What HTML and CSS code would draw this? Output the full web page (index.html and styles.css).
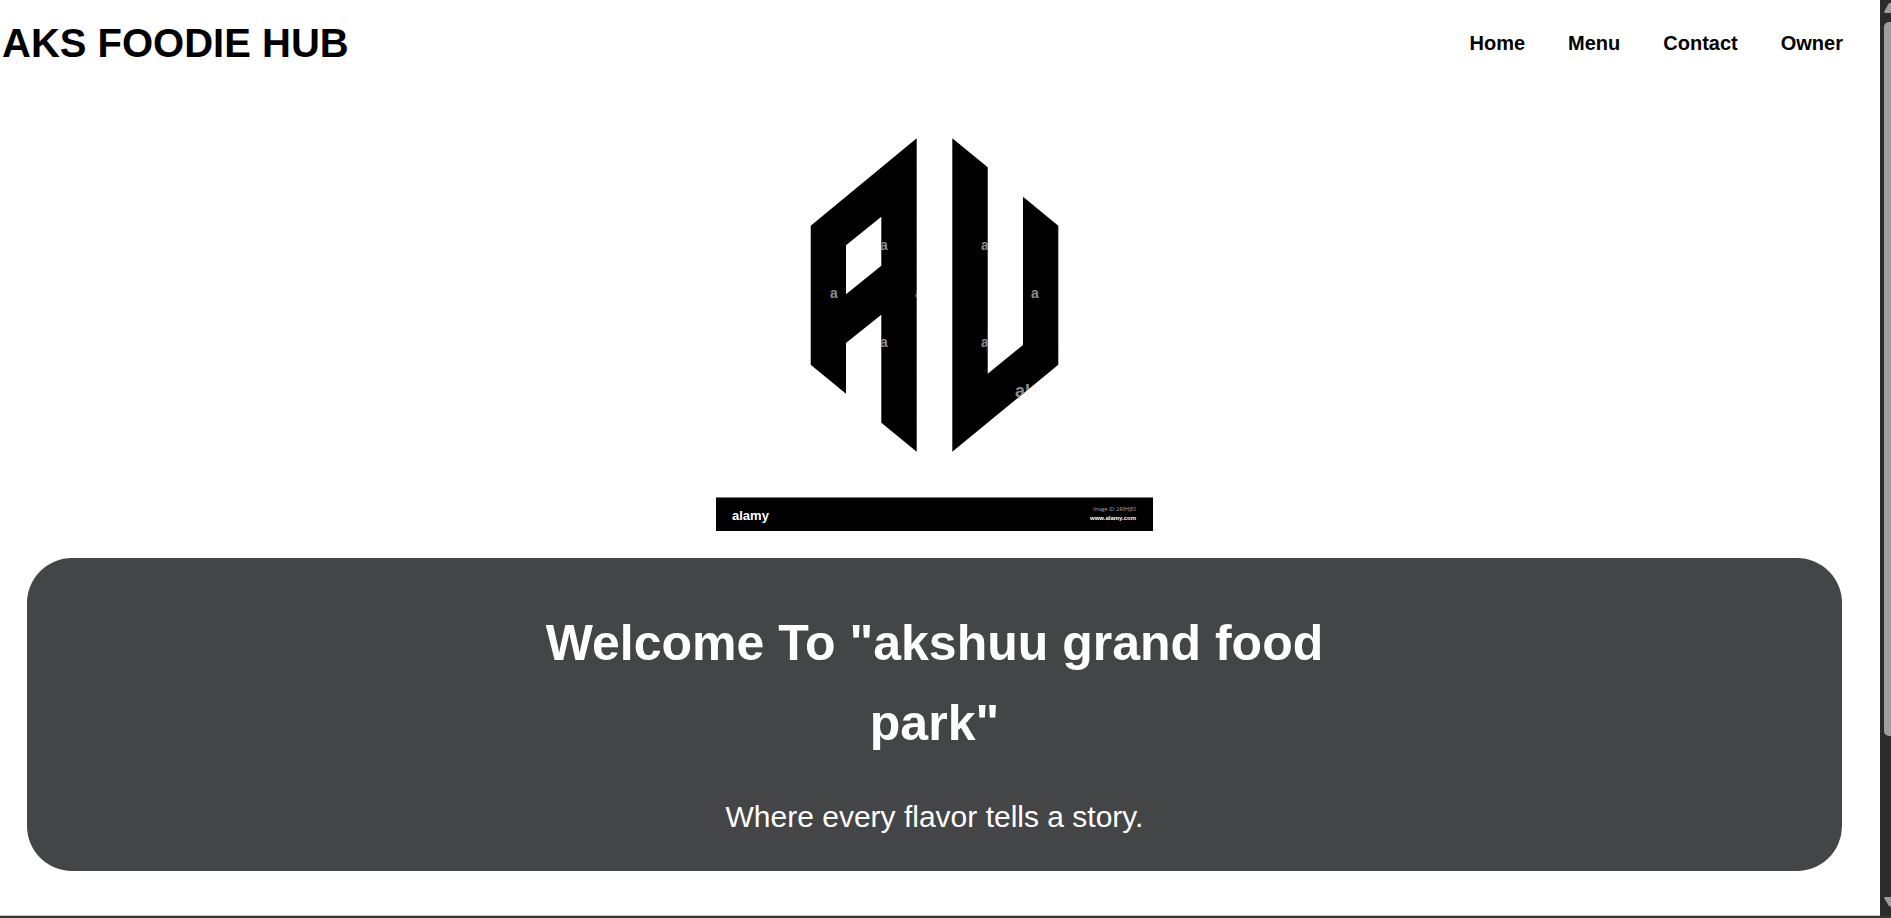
FILE: index.html
```
<!DOCTYPE html>
<html lang="en">
<head>
<meta charset="utf-8">
<title>AKS FOODIE HUB</title>
<link rel="stylesheet" href="styles.css">
</head>
<body>
<div class="page">
  <header class="header">
    <h1 class="brand">AKS FOODIE HUB</h1>
    <nav class="nav">
      <a href="#home">Home</a>
      <a href="#menu">Menu</a>
      <a href="#contact">Contact</a>
      <a href="#owner">Owner</a>
    </nav>
  </header>
  <main class="main" id="home">
    <svg class="logo" viewBox="0 0 437 411" role="img" aria-label="AU monogram">
      <defs>
        <clipPath id="mono">
          <path clip-rule="evenodd" d="M200.7 18.3 94.7 105.7V244.7L130 273.7V223L165.3 194.7V302.7L200.7 331.7ZM130 125.3 165.3 96.7V145.7L130 174.3ZM236.3 18.3 271.7 47.3V253.7L307 225V76.7L342.3 105.7V244.7L236.3 331.7Z"/>
        </clipPath>
      </defs>
      <g clip-path="url(#mono)">
        <rect width="437" height="350"/>
        <g class="mark">
          <text x="114" y="178">a</text>
          <text x="164" y="130">a</text>
          <text x="164" y="227">a</text>
          <text x="199" y="178">a</text>
          <text x="265" y="130">a</text>
          <text x="265" y="227">a</text>
          <text x="315" y="178">a</text>
          <text class="mark-large" x="299" y="277">alamy</text>
        </g>
      </g>
      <rect y="377" width="437" height="34"/>
      <rect y="377" width="437" height="1" fill="#777"/>
      <text class="bar-name" x="16" y="400">alamy</text>
      <text class="bar-id" x="420" y="391">Image ID: 2R9HJE0</text>
      <text class="bar-site" x="420" y="400">www.alamy.com</text>
    </svg>
    <section class="hero">
      <h2 class="hero-title">Welcome To "akshuu grand food park"</h2>
      <p class="hero-text">Where every flavor tells a story.</p>
    </section>
  </main>
</div>
<div class="scrollbar" aria-hidden="true">
  <svg class="arrow" viewBox="0 0 7 10"><path d="M0 9 5 0H7V10H1Z"/></svg>
  <div class="thumb"></div>
  <svg class="arrow arrow-down" viewBox="0 0 7 10"><path d="M0 1 5 9 7 10V0H1Z"/></svg>
</div>
</body>
</html>
```
FILE: styles.css
```
* {
  box-sizing: border-box;
  margin: 0;
  padding: 0;
}

body {
  display: flex;
  min-height: 100vh;
  border-bottom: 2px solid #373737;
  background: #fff;
  color: #000;
  font-family: "Liberation Sans", Arial, sans-serif;
  overflow: hidden;
}

.page {
  flex: 1;
  border-bottom: 1px solid #c8c8c8;
}

.header {
  display: flex;
  align-items: center;
  justify-content: space-between;
  padding: 20px 37px 20px 2px;
}

.brand {
  font-size: 40px;
  line-height: 46px;
}

.nav {
  display: flex;
  gap: 43px;
}

.nav a {
  color: #000;
  font-size: 20px;
  font-weight: bold;
  line-height: 24px;
  text-decoration: none;
}

.main {
  display: flex;
  flex-direction: column;
  align-items: center;
  gap: 27px;
  padding: 34px 38px 44px 27px;
}

.logo {
  display: block;
  width: 437px;
  max-width: 100%;
}

.mark {
  fill: #8c8c8c;
  font-size: 14px;
  font-weight: bold;
}

.mark-large {
  font-size: 18px;
}

.bar-name {
  fill: #fff;
  font-size: 13px;
  font-weight: bold;
}

.bar-id,
.bar-site {
  fill: #aaa;
  font-family: "Open Sans", sans-serif;
  font-size: 5px;
  text-anchor: end;
}

.bar-site {
  fill: #fff;
  font-family: "Liberation Sans", Arial, sans-serif;
  font-size: 6px;
  font-weight: bold;
}

.hero {
  align-self: stretch;
  padding: 45px 32px 30px;
  border-radius: 45px;
  background: #444546;
  color: #fff;
  text-align: center;
}

.hero-title {
  max-width: 800px;
  margin: 0 auto 30px;
  font-size: 50px;
  line-height: 80px;
}

.hero-text {
  font-size: 30px;
  line-height: 48px;
}

.scrollbar {
  display: flex;
  flex-direction: column;
  width: 11px;
  padding: 3px 0 9px 4px;
  background: #2c2c2c;
}

.arrow {
  flex: none;
  width: 7px;
  height: 10px;
  fill: #9f9f9f;
}

.thumb {
  height: 79%;
  margin-top: 9px;
  border-radius: 5px 0 0 5px;
  background: #9f9f9f;
}

.arrow-down {
  margin-top: auto;
}
```
